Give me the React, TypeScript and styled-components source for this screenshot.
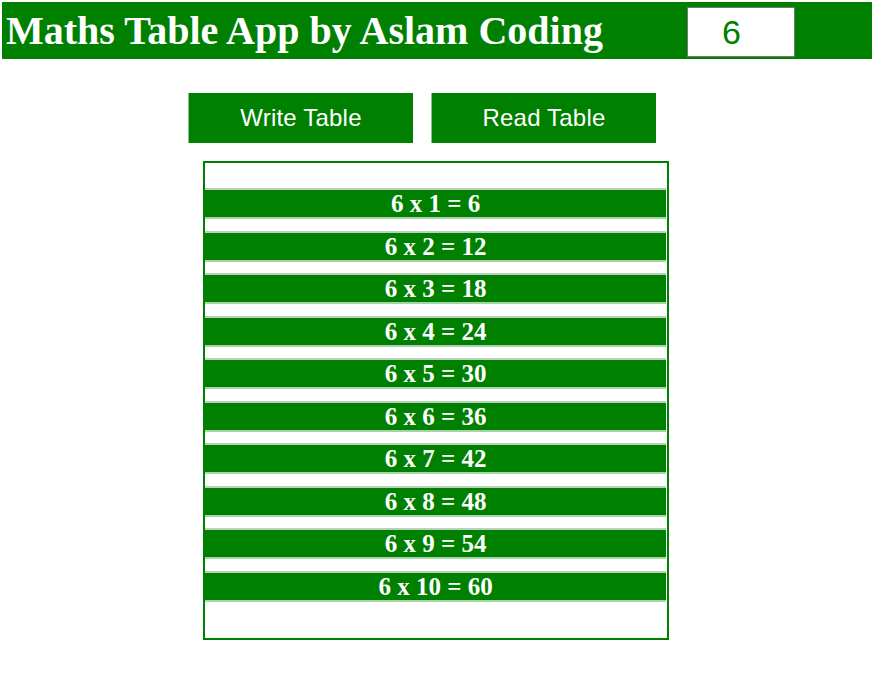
import React, { useState } from "react";
import styled, { createGlobalStyle } from "styled-components";

const GlobalStyle = createGlobalStyle`
  html, body {
    margin: 0;
    padding: 0;
    background: #ffffff;
  }
  body {
    font-family: "Liberation Serif", "Times New Roman", serif;
  }
`;

const Page = styled.div`
  display: flex;
  flex-direction: column;
`;

const Header = styled.header`
  display: flex;
  align-items: center;
  height: 57px;
  margin: 2px 2px 0 2px;
  background: #008000;
`;

const Title = styled.h1`
  margin: 0 0 0 4px;
  font-family: "Liberation Serif", "Times New Roman", serif;
  font-weight: bold;
  font-size: 40px;
  color: #ffffff;
  white-space: nowrap;
`;

const NumberInput = styled.input`
  box-sizing: border-box;
  align-self: flex-start;
  margin: 5px 77px 0 auto;
  width: 108px;
  height: 50px;
  padding: 0 0 0 34px;
  border: 1px solid #767676;
  background: #ffffff;
  color: #008000;
  font-family: "Liberation Sans", Arial, sans-serif;
  font-size: 34px;
  outline: none;
`;

const ButtonRow = styled.div`
  display: flex;
  gap: 18px;
  margin: 34px 0 0 188px;
`;

const ActionButton = styled.button`
  box-sizing: border-box;
  width: 225px;
  height: 50px;
  border: none;
  border-left: 1px solid #8cc08c;
  background: #008000;
  color: #ffffff;
  font-family: "Liberation Sans", Arial, sans-serif;
  font-size: 24px;
  letter-spacing: 0.2px;
  cursor: pointer;
`;

const TableBox = styled.div`
  box-sizing: border-box;
  display: flex;
  flex-direction: column;
  gap: 11.5px;
  width: 466px;
  height: 479px;
  margin: 18px 0 0 203px;
  padding: 25px 1px 0 0;
  border: 2px solid #008000;
`;

const Row = styled.div`
  border-top: 2px solid #bcd0bc;
  border-bottom: 2px solid #a6d4a6;
  background: #008000;
  color: #ffffff;
  text-align: center;
  font-family: "Liberation Serif", "Times New Roman", serif;
  font-weight: bold;
  font-size: 25px;
  line-height: 27px;
`;

export default function App() {
  const [num, setNum] = useState("6");
  const n = Number(num) || 0;
  const rows = Array.from({ length: 10 }, (_, i) => i + 1);
  return (
    <Page>
      <GlobalStyle />
      <Header>
        <Title>Maths Table App by Aslam Coding</Title>
        <NumberInput
          type="text"
          value={num}
          onChange={(e) => setNum(e.target.value)}
        />
      </Header>
      <ButtonRow>
        <ActionButton>Write Table</ActionButton>
        <ActionButton>Read Table</ActionButton>
      </ButtonRow>
      <TableBox>
        {rows.map((i) => (
          <Row key={i}>
            {n} x {i} = {n * i}
          </Row>
        ))}
      </TableBox>
    </Page>
  );
}
